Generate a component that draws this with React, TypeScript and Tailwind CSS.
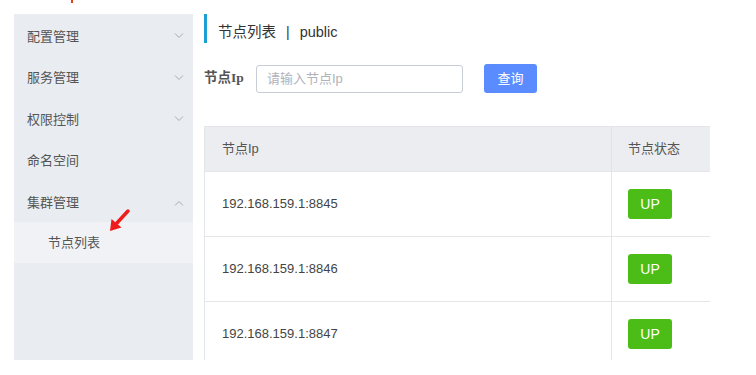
import React from "react";

const font = { fontFamily: '"Liberation Sans", "Noto Sans CJK SC", sans-serif' };

function Chevron({ up }: { up?: boolean }) {
  return (
    <svg width="10" height="6" viewBox="0 0 10 6" className="text-[#a8abb2]">
      {up ? (
        <path d="M1 5.5 L5 1.5 L9 5.5" fill="none" stroke="currentColor" strokeWidth="1" />
      ) : (
        <path d="M1 0.5 L5 4.5 L9 0.5" fill="none" stroke="currentColor" strokeWidth="1" />
      )}
    </svg>
  );
}

const menu = [
  { label: "配置管理", chev: "down" },
  { label: "服务管理", chev: "down" },
  { label: "权限控制", chev: "down" },
  { label: "命名空间", chev: "" },
  { label: "集群管理", chev: "up" },
];

const rows = ["192.168.159.1:8845", "192.168.159.1:8846", "192.168.159.1:8847"];

export default function App() {
  return (
    <div className="relative w-[756px] h-[375px] bg-white overflow-hidden" style={font}>
      <div className="absolute left-[71px] top-0 w-[2px] h-[3px] bg-[#e0441c]" />
      <div className="flex pl-[14px] pt-[14px] h-[360px] overflow-hidden">
        <aside className="w-[179px] h-[346px] shrink-0 bg-[#e9ecf0] flex flex-col">
          {menu.map((m) => (
            <div
              key={m.label}
              className="h-[41.6px] shrink-0 flex items-center justify-between pt-[3px] pl-[13px] pr-[9px] text-[13px] text-[#555]"
            >
              <span>{m.label}</span>
              {m.chev === "down" && <Chevron />}
              {m.chev === "up" && <Chevron up />}
            </div>
          ))}
          <div className="h-[41px] shrink-0 bg-[#f0f2f5] flex items-center pl-[34px] text-[13px] text-[#555]">
            节点列表
          </div>
        </aside>
        <main className="ml-[11px] w-[506px] shrink-0 flex flex-col">
          <div className="h-[29px] shrink-0 border-l-[3px] border-[#1c9fd4] flex items-center pt-[8px] pl-[11px] text-[14.5px] text-[#333]">
            <span>节点列表</span>
            <span className="mx-[10px] text-[14px]">|</span>
            <span>public</span>
          </div>
          <div className="mt-[21px] shrink-0 flex items-center h-[29px]">
            <span
              className="text-[13.5px] font-bold text-[#555] w-[52px]"
              style={{ fontFamily: '"Liberation Serif", "Noto Sans CJK SC", serif' }}
            >
              节点Ip
            </span>
            <div className="w-[207px] h-[28px] border border-[#c8ccd4] rounded-[3px] flex items-center pl-[10px] text-[13px] text-[#b0b3b9]">
              请输入节点Ip
            </div>
            <button className="ml-[21px] w-[53px] h-[29px] rounded-[3px] bg-[#5a8cff] text-white text-[13px]">
              查询
            </button>
          </div>
          <div className="mt-[33px] shrink-0 border-l border-t border-[#e3e5e8]">
            <div className="h-[45px] bg-[#ebedf0] flex items-center text-[13px] text-[#555] border-b border-[#e3e5e8]">
              <div className="w-[407px] pl-[17px] h-full flex items-center border-r border-[#e0e2e5]">节点Ip</div>
              <div className="pl-[16px]">节点状态</div>
            </div>
            {rows.map((r) => (
              <div key={r} className="h-[65px] flex items-center text-[13px] text-[#444] border-b border-[#e6e6e6]">
                <div className="w-[407px] pl-[17px] h-full flex items-center border-r border-[#e6e6e6]">{r}</div>
                <div className="pl-[16px]">
                  <span className="inline-flex items-center justify-center w-[44px] h-[30px] rounded-[3px] bg-[#4cbd17] text-white text-[14px]">
                    UP
                  </span>
                </div>
              </div>
            ))}
          </div>
        </main>
      </div>
      <svg className="absolute left-[106px] top-[207px]" width="26" height="28" viewBox="0 0 26 28">
        <path d="M22 4 L10 17" stroke="#ee1c1c" strokeWidth="3.5" strokeLinecap="round" />
        <path d="M4 24 L5.5 12 L15.5 20.5 Z" fill="#ee1c1c" />
      </svg>
    </div>
  );
}
